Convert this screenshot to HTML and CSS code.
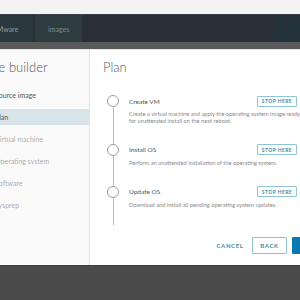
FILE: index.html
```html
<!DOCTYPE html>
<html>
<head>
    <meta charset="utf-8"/>
    <title>Image builder - Plan</title>
    <link rel="stylesheet" href="styles.css">
</head>
<body>
<div class="topstrip"></div>

<!--背景应用栏-->
<div class="appbar">
    <div class="tab tab-brand"><span>VMware</span></div>
    <div class="tab tab-images">images</div>
    <div class="appbar-fill"></div>
    <div class="appbar-end"></div>
</div>
<div class="band"></div>

<!--向导弹窗-->
<div class="modal">
    <nav class="stepnav">
        <h1 class="wizard-title">Image builder</h1>
        <ul class="nav-list">
            <li class="nav-item">Source image</li>
            <li class="nav-item is-current">Plan</li>
            <li class="nav-item is-disabled">Virtual machine</li>
            <li class="nav-item is-disabled">Operating system</li>
            <li class="nav-item is-disabled">Software</li>
            <li class="nav-item is-disabled">Sysprep</li>
        </ul>
    </nav>

    <section class="wizard-page">
        <h2 class="page-title">Plan</h2>
        <ol class="plan">
            <li class="plan-step">
                <span class="marker"><span class="dot"></span><span class="stem"></span></span>
                <span class="step-name">Create VM</span>
                <button class="stop-btn">STOP HERE</button>
                <p class="step-desc">Create a virtual machine and apply the operating system image ready for unattended install on the next reboot.</p>
            </li>
            <li class="plan-step">
                <span class="marker"><span class="dot"></span><span class="stem"></span></span>
                <span class="step-name">Install OS</span>
                <button class="stop-btn">STOP HERE</button>
                <p class="step-desc">Perform an unattended installation of the operating system.</p>
            </li>
            <li class="plan-step">
                <span class="marker"><span class="dot"></span><span class="stem"></span></span>
                <span class="step-name">Update OS</span>
                <button class="stop-btn">STOP HERE</button>
                <p class="step-desc">Download and install all pending operating system updates.</p>
            </li>
        </ol>

        <div class="wizard-footer">
            <button class="btn btn-link">CANCEL</button>
            <button class="btn btn-outline">BACK</button>
            <button class="btn btn-primary">NEXT</button>
        </div>
    </section>
</div>

<div class="backdrop-foot"></div>
</body>
</html>
```

FILE: styles.css
```css
html, body {
    margin: 0;
    padding: 0;
    width: 300px;
    height: 300px;
    overflow: hidden;
    background: #4b4b4b;
    font-family: Lato, "Open Sans", "Liberation Sans", sans-serif;
}

.topstrip {
    height: 14px;
    background: #f3f3f3;
}

/* 应用栏 */
.appbar {
    height: 28px;
    display: flex;
    background: #2a2f37;
    border-top: 1px solid #3a4048;
    box-sizing: border-box;
}

.tab {
    display: flex;
    align-items: center;
    font-size: 7px;
    color: #8a979d;
}

.tab-brand {
    width: 33px;
    background: #2c3840;
    overflow: hidden;
}

.tab-brand span {
    margin-left: -8px;
}

.tab-images {
    margin-left: 2px;
    padding: 0 13px;
    background: #2e3b3f;
    color: #7d8b90;
}

.appbar-fill {
    flex: 1;
}

.appbar-end {
    width: 25px;
    background: #23323a;
}

.band {
    height: 7px;
    background: #5a5a5a;
}

/* 弹窗 */
.modal {
    height: 216px;
    width: 350px;
    margin-left: -6px;
    display: flex;
    background: #fff;
    border-top: 1px solid #e6e6e6;
    box-sizing: border-box;
}

.stepnav {
    width: 96px;
    background: #fafafa;
    border-right: 1px solid #e2e2e2;
    box-sizing: border-box;
}

.wizard-title {
    margin: 9px 0 12px -22px;
    font-size: 13px;
    line-height: 16px;
    font-weight: 300;
    color: #565656;
    white-space: nowrap;
}

.nav-list {
    list-style: none;
    margin: 0;
    padding: 0;
}

.nav-item {
    height: 16px;
    line-height: 16px;
    margin-bottom: 6px;
    padding-left: 1px;
    font-size: 7px;
    color: #565656;
    white-space: nowrap;
}

.nav-item.is-current {
    background: #d9e4ea;
}

.nav-item.is-disabled {
    color: #b0b0b0;
}

.wizard-page {
    flex: 1;
    display: flex;
    flex-direction: column;
    padding: 9px 14px 11px 13px;
}

.page-title {
    margin: 0;
    font-size: 13px;
    line-height: 16px;
    font-weight: 300;
    color: #5a5a5a;
}

/* 计划步骤 */
.plan {
    list-style: none;
    margin: 20px 0 0 0;
    padding: 0;
    width: 194px;
}

.plan-step {
    display: grid;
    grid-template-columns: 26px 1fr 40px;
    grid-template-rows: 12px auto;
    padding-bottom: 19.5px;
}

.plan-step:last-child {
    padding-bottom: 17px;
}

.marker {
    grid-column: 1;
    grid-row: 1 / 3;
    display: flex;
    flex-direction: column;
    margin-bottom: -19.5px;
}

.plan-step:last-child .marker {
    margin-bottom: -17px;
}

.dot {
    width: 12px;
    height: 12px;
    margin-left: 4px;
    border: 1px solid #9c9c9c;
    border-radius: 50%;
    box-sizing: border-box;
    background: #fff;
}

.stem {
    flex: 1;
    width: 1px;
    margin-left: 9.5px;
    background: #bdbdbd;
}

.step-name {
    grid-column: 2;
    grid-row: 1;
    align-self: center;
    font-size: 6.5px;
    color: #555;
}

.stop-btn {
    grid-column: 3;
    grid-row: 1;
    align-self: center;
    height: 11px;
    width: 40px;
    padding: 0;
    border: 1px solid #8fc5d5;
    border-radius: 1px;
    background: #fff;
    font: inherit;
    font-size: 5px;
    font-weight: 700;
    letter-spacing: 0.4px;
    color: #3a8ea7;
}

.step-desc {
    grid-column: 2 / 4;
    grid-row: 2;
    margin: 4px -10px 0 0;
    font-size: 5.7px;
    line-height: 6.5px;
    color: #8a8a8a;
}

/* 底部按钮 */
.wizard-footer {
    margin-top: auto;
    display: flex;
    justify-content: flex-end;
    gap: 5px;
}

.btn {
    height: 17px;
    padding: 0;
    border-radius: 1px;
    font: inherit;
    font-size: 6px;
    font-weight: 700;
    letter-spacing: 0.6px;
}

.btn-link {
    width: 34px;
    border: 0;
    background: none;
    color: #3a8ea7;
}

.btn-outline {
    width: 35px;
    border: 1px solid #8fc2d2;
    background: #fff;
    color: #3e8da5;
}

.btn-primary {
    width: 38px;
    border: 0;
    background: #0a79b1;
    color: #fff;
}

.backdrop-foot {
    height: 35px;
    background: #4b4b4b;
    border-top: 1px solid #3d3d3d;
}
```
